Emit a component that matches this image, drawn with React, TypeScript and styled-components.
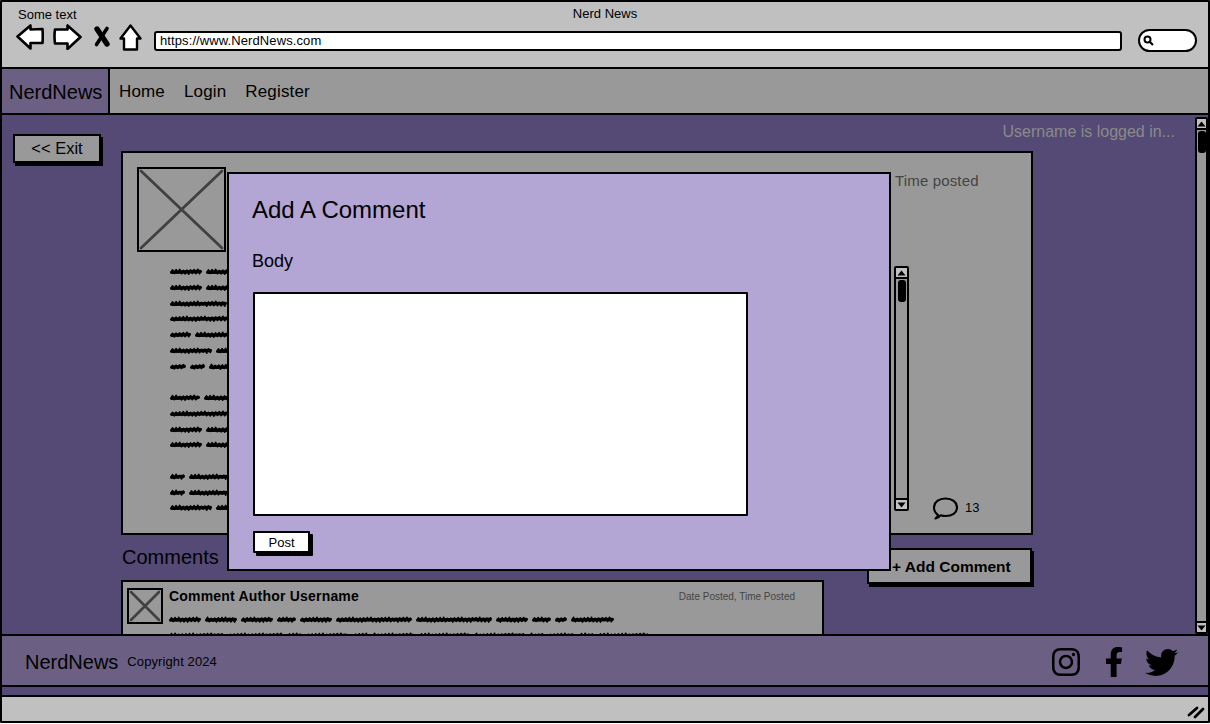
import React from "react";
import styled, { createGlobalStyle } from "styled-components";
import { FaInstagram, FaFacebookF, FaTwitter } from "react-icons/fa";

const Global = createGlobalStyle`
  html, body { margin: 0; padding: 0; background: #fff; }
  body { font-family: "Liberation Sans", Arial, sans-serif; color: #000; }
  * { box-sizing: border-box; }
`;

const Frame = styled.div`
  width: 1210px;
  height: 723px;
  border: 2px solid #000;
  border-radius: 1px;
  display: flex;
  flex-direction: column;
  overflow: hidden;
  background: #544a75;
`;

/* ---------- browser chrome ---------- */
const TitleBar = styled.header`
  height: 67px;
  flex: none;
  background: #c0c0c0;
  border-bottom: 2px solid #000;
  padding-top: 4px;
`;
const CaptionRow = styled.div`
  display: grid;
  grid-template-columns: 1fr auto 1fr;
  height: 16px;
  font-size: 13px;
  line-height: 16px;
`;
const SomeText = styled.span`
  margin: 1px 0 0 16px;
`;
const ToolRow = styled.div`
  display: flex;
  align-items: flex-start;
  margin-top: 2px;
  padding-left: 14px;
`;
const ToolIcon = styled.svg<{ $gap?: number }>`
  display: block;
  flex: none;
  margin-left: ${(p) => p.$gap ?? 0}px;
`;
const UrlBar = styled.div`
  width: 968px;
  height: 20px;
  margin: 7px 0 0 12px;
  background: #fff;
  border: 2px solid #000;
  border-radius: 3px;
  padding-left: 4px;
  font-size: 13px;
  line-height: 15px;
  letter-spacing: 0.1px;
`;
const SearchBox = styled.div`
  width: 59px;
  height: 23px;
  margin: 5px 0 0 16px;
  background: #fff;
  border: 2px solid #000;
  border-radius: 12px;
  display: flex;
  align-items: center;
  padding-left: 3px;
`;

/* ---------- site nav ---------- */
const NavBar = styled.nav`
  height: 46px;
  flex: none;
  background: #999;
  border-bottom: 2px solid #000;
  display: flex;
  align-items: stretch;
`;
const Brand = styled.div`
  width: 108px;
  background: #6b6083;
  border-right: 2px solid #000;
  padding-left: 7px;
  font-size: 20px;
  line-height: 47px;
`;
const NavLinks = styled.div`
  display: flex;
  gap: 19px;
  padding-left: 9px;
  font-size: 17px;
  line-height: 46px;
  letter-spacing: 0.15px;
`;

/* ---------- page content ---------- */
const Content = styled.main`
  position: relative;
  height: 519px;
  flex: none;
  overflow: hidden;
  background: #544a75;
  display: grid;
  grid-template-columns: 119px 912px 1fr 13px;
  grid-template-rows: 36px 1fr;
`;
const SideColumn = styled.div`
  grid-column: 1;
  grid-row: 1 / 3;
  padding: 19px 0 0 11px;
`;
const ExitButton = styled.button`
  display: block;
  width: 88px;
  height: 29px;
  padding: 0;
  background: #999;
  border: 2px solid #000;
  box-shadow: 2px 3px 0 #000;
  font: 400 16.5px/25px "Liberation Sans", Arial, sans-serif;
  color: #000;
`;
const LoggedIn = styled.div`
  grid-column: 2 / 4;
  grid-row: 1;
  padding-right: 20px;
  text-align: right;
  font-size: 16px;
  line-height: 33px;
  color: #8a8a8a;
`;
const MainColumn = styled.div`
  grid-column: 2;
  grid-row: 2;
  min-height: 0;
`;
const PostCard = styled.article`
  height: 384px;
  background: #999;
  border: 2px solid #000;
  padding: 14px 0 0 14px;
  display: flex;
`;
const PostLeft = styled.div`
  width: 757px;
  flex: none;
`;
const Thumb = styled.svg`
  display: block;
  flex: none;
`;
const PostBody = styled.div`
  margin: 12px 0 0 33px;
`;
const PostRight = styled.div`
  flex: 1;
`;
const TimePosted = styled.div`
  padding-left: 1px;
  font-size: 15px;
  line-height: 28px;
  letter-spacing: 0.15px;
  color: #444;
`;
const ScrollRow = styled.div`
  display: flex;
  align-items: flex-end;
  margin-top: 71px;
`;
const ScrollTrack = styled.div<{ $w: number; $h: number; $top?: number }>`
  position: relative;
  width: ${(p) => p.$w}px;
  height: ${(p) => p.$h}px;
  margin-top: ${(p) => p.$top ?? 0}px;
  flex: none;
  grid-column: 4;
  grid-row: 1 / 3;
  background: #999;
  border: 2px solid #000;
  border-radius: 2px;
  display: flex;
  flex-direction: column;
  justify-content: space-between;
`;
const ScrollCap = styled.div`
  height: 11px;
  background: #c0c0c0;
  display: flex;
  align-items: center;
  justify-content: center;
  border-bottom: 2px solid #000;
  &:last-child { border-bottom: 0; border-top: 2px solid #000; }
`;
const ScrollThumb = styled.div`
  position: absolute;
  top: 12px;
  left: 50%;
  margin-left: -4px;
  width: 8px;
  height: 22px;
  background: #000;
  border-radius: 3px;
`;
const CountGroup = styled.div`
  display: flex;
  align-items: center;
  gap: 7px;
  margin: 0 0 -9px 24px;
  font-size: 13px;
`;
const CountValue = styled.span`
  margin-top: -2px;
`;
const CommentsHead = styled.div`
  height: 45px;
  display: flex;
  justify-content: space-between;
  align-items: flex-start;
`;
const CommentsTitle = styled.h2`
  margin: 10px 0 0 1px;
  font-size: 20px;
  font-weight: 400;
  line-height: 24px;
`;
const AddButton = styled.button`
  width: 165px;
  height: 36px;
  margin: 13px 1px 0 0;
  padding: 0 0 0 23px;
  background: #999;
  border: 2px solid #000;
  box-shadow: 2px 3px 0 #000;
  font: 700 15.5px/34px "Liberation Sans", Arial, sans-serif;
  color: #000;
  text-align: left;
`;
const CommentCard = styled.article`
  width: 703px;
  height: 90px;
  background: #999;
  border: 2px solid #000;
  padding: 6px 27px 0 4px;
  display: flex;
  gap: 6px;
`;
const CommentMain = styled.div`
  flex: 1;
`;
const CommentHead = styled.div`
  display: flex;
  justify-content: space-between;
  align-items: center;
  height: 16px;
`;
const Author = styled.strong`
  font-size: 14px;
  letter-spacing: 0.2px;
`;
const CommentDate = styled.span`
  font-size: 10px;
  color: #444;
`;
const CommentBody = styled.div`
  margin-top: 8px;
`;
const SquiggleSvg = styled.svg`
  display: block;
`;

/* ---------- modal ---------- */
const Modal = styled.section`
  position: absolute;
  left: 225px;
  top: 57px;
  width: 664px;
  height: 399px;
  background: #b3a5d4;
  border: 2px solid #000;
  padding: 18px 0 0 23px;
`;
const ModalTitle = styled.h1`
  margin: 0;
  font-size: 24px;
  font-weight: 400;
  line-height: 36px;
`;
const FieldLabel = styled.label`
  display: block;
  margin-top: 21px;
  font-size: 18px;
  line-height: 24px;
`;
const TextBox = styled.div`
  width: 495px;
  height: 224px;
  margin: 19px 0 0 1px;
  background: #fff;
  border: 2px solid #000;
  border-radius: 1px;
`;
const PostButton = styled.button`
  display: block;
  width: 57px;
  height: 22px;
  margin: 15px 0 0 1px;
  padding: 0;
  background: #fff;
  border: 2px solid #000;
  border-radius: 1px;
  box-shadow: 3px 3px 0 #000;
  font: 400 13px/20px "Liberation Sans", Arial, sans-serif;
  color: #000;
`;

/* ---------- footer ---------- */
const Footer = styled.footer`
  height: 53px;
  flex: none;
  background: #6b6083;
  border-top: 2px solid #000;
  border-bottom: 2px solid #000;
  display: flex;
  align-items: center;
  padding: 3px 30px 0 23px;
`;
const FooterBrand = styled.span`
  font-size: 20px;
`;
const Copyright = styled.span`
  margin: -1px 0 0 9px;
  font-size: 13px;
  letter-spacing: 0.1px;
`;
const Socials = styled.div`
  margin-left: auto;
  display: flex;
  align-items: center;
  gap: 16.5px;
  line-height: 0;
`;
const Strip = styled.div`
  height: 8px;
  flex: none;
  background: #544a75;
`;
const StatusBar = styled.div`
  height: 26px;
  flex: none;
  background: #c0c0c0;
  border-top: 2px solid #000;
  display: flex;
  justify-content: flex-end;
  align-items: center;
  padding: 4px 2px 0 0;
`;

/* ---------- drawings ---------- */
function wordPath(x0: number, x1: number, seed: number, mid: number) {
  let d = `M${x0} ${mid + 0.8}`;
  let i = 0;
  for (let x = x0 + 1.5; x < x1; x += 1.8) {
    const up = i % 2 === 0;
    const j = ((seed * 7 + i * 13) % 5) / 5;
    const lift = i % 7 === 3 ? 0.8 : 0;
    d += ` L${x.toFixed(1)} ${(mid + (up ? -1.4 - j * 1.3 : 1.5 + j * 0.9 - lift)).toFixed(1)}`;
    i += 1;
  }
  d += ` L${x1} ${mid - 0.8}`;
  return d;
}

const Squiggle = ({ words, width, height = 16 }: { words: number[]; width: number; height?: number }) => {
  let x = 1;
  const mid = height / 2;
  return (
    <SquiggleSvg width={width} height={height} viewBox={`0 0 ${width} ${height}`} aria-hidden="true">
      {words.map((w, i) => {
        const d = wordPath(x, x + w - 1, i + w, mid);
        const base = `M${x + 1} ${mid + 0.3} L${x + w - 2} ${mid - 0.3}`;
        x += w + 5;
        return (
          <g key={i} fill="none" stroke="#000" strokeLinecap="round" strokeLinejoin="round">
            <path d={base} strokeWidth={3.6} />
            <path d={d} strokeWidth={1.7} />
          </g>
        );
      })}
    </SquiggleSvg>
  );
};

const ImagePlaceholder = ({ w, h, inset, stroke }: { w: number; h: number; inset: number; stroke: number }) => (
  <Thumb width={w} height={h} viewBox={`0 0 ${w} ${h}`} aria-hidden="true">
    <rect x={1} y={1} width={w - 2} height={h - 2} fill="#999" stroke="#000" strokeWidth={2} />
    <path
      d={`M${inset} ${inset} L${w - inset} ${h - inset} M${w - inset} ${inset} L${inset} ${h - inset}`}
      stroke="#404040"
      strokeWidth={stroke}
      strokeLinecap="round"
    />
  </Thumb>
);

const Triangle = ({ down }: { down?: boolean }) => (
  <svg width="9" height="6" viewBox="0 0 9 6" aria-hidden="true">
    <path d={down ? "M0.5 0.5 H8.5 L4.5 5.5 Z" : "M0.5 5.5 H8.5 L4.5 0.5 Z"} fill="#000" />
  </svg>
);

const Scrollbar = ({ w, h, top }: { w: number; h: number; top?: number }) => (
  <ScrollTrack $w={w} $h={h} $top={top}>
    <ScrollCap>
      <Triangle />
    </ScrollCap>
    <ScrollThumb />
    <ScrollCap>
      <Triangle down />
    </ScrollCap>
  </ScrollTrack>
);

const POST_LINES: (number[] | null)[] = [
  [31, 60],
  [31, 60],
  [56, 40],
  [60, 40],
  [20, 60],
  [41, 60],
  [15, 14, 60],
  null,
  [29, 60],
  [60, 40],
  [31, 60],
  [31, 60],
  null,
  [14, 60],
  [14, 60],
  [41, 60],
];

const COMMENT_WORDS = [31, 31, 31, 18, 31, 75, 75, 31, 18, 11, 42];
const COMMENT_WORDS_2 = [54, 54, 14, 42, 14, 42, 50, 50, 14, 26, 14, 50, 54];

export default function App() {
  return (
    <>
      <Global />
      <Frame>
        <TitleBar>
          <CaptionRow>
            <SomeText>Some text</SomeText>
            <span>Nerd News</span>
            <span />
          </CaptionRow>
          <ToolRow>
            <ToolIcon width="28" height="26" viewBox="0 0 28 26" aria-hidden="true">
              <path d="M1.5 12.5 L14.5 1.5 V5.5 L26.5 5 Q27 12 26.5 19 L14.5 19 V24.5 Z" fill="#fff" stroke="#000" strokeWidth="2.6" strokeLinejoin="round" />
            </ToolIcon>
            <ToolIcon $gap={9} width="29" height="26" viewBox="0 0 29 26" aria-hidden="true">
              <path d="M27.5 13 L14.5 1.5 V5.5 L2 5.5 Q1 12 2 19.5 L14.5 19.5 V25 Z" fill="#fff" stroke="#000" strokeWidth="2.6" strokeLinejoin="round" />
            </ToolIcon>
            <ToolIcon $gap={12} width="16" height="26" viewBox="0 0 16 26" aria-hidden="true">
              <path d="M3 5 L13 20" stroke="#000" strokeWidth="5.4" strokeLinecap="round" />
              <path d="M13 4.5 L2.5 20.5" stroke="#000" strokeWidth="3.6" strokeLinecap="round" />
            </ToolIcon>
            <ToolIcon $gap={9} width="23" height="27" viewBox="0 0 23 27" aria-hidden="true">
              <path d="M11.5 1.5 L21.5 14.5 H18 V25.5 H5 V14.5 H1.5 Z" fill="#fff" stroke="#000" strokeWidth="2.4" strokeLinejoin="round" />
            </ToolIcon>
            <UrlBar>https://www.NerdNews.com</UrlBar>
            <SearchBox>
              <svg width="11" height="11" viewBox="0 0 11 11" aria-hidden="true">
                <circle cx="4.5" cy="4.5" r="3" fill="none" stroke="#000" strokeWidth="2" />
                <path d="M7 7 L10 10" stroke="#000" strokeWidth="2.2" />
              </svg>
            </SearchBox>
          </ToolRow>
        </TitleBar>

        <NavBar>
          <Brand>NerdNews</Brand>
          <NavLinks>
            <span>Home</span>
            <span>Login</span>
            <span>Register</span>
          </NavLinks>
        </NavBar>

        <Content>
          <SideColumn>
            <ExitButton>&lt;&lt; Exit</ExitButton>
          </SideColumn>
          <LoggedIn>Username is logged in...</LoggedIn>
          <MainColumn>
            <PostCard>
              <PostLeft>
                <ImagePlaceholder w={89} h={85} inset={4} stroke={2.8} />
                <PostBody>
                  {POST_LINES.map((words, i) => (
                    <Squiggle key={i} words={words ?? []} width={100} height={15.75} />
                  ))}
                </PostBody>
              </PostLeft>
              <PostRight>
                <TimePosted>Time posted</TimePosted>
                <ScrollRow>
                  <Scrollbar w={15} h={245} />
                  <CountGroup>
                    <svg width="25" height="23" viewBox="0 0 25 23" aria-hidden="true">
                      <path
                        d="M5 18 C1.5 15.5 1 12 1 10.5 C1 5 6 1.5 12.5 1.5 C19 1.5 24 5 24 10.5 C24 16 19 19 12.5 19 C10.5 19 9 18.6 7.5 18.2 C6.5 19.8 4.8 21 2.5 21.5 C3.8 20.5 4.8 19.3 5 18 Z"
                        fill="none"
                        stroke="#000"
                        strokeWidth="2.1"
                        strokeLinejoin="round"
                      />
                    </svg>
                    <CountValue>13</CountValue>
                  </CountGroup>
                </ScrollRow>
              </PostRight>
            </PostCard>
            <CommentsHead>
              <CommentsTitle>Comments</CommentsTitle>
              <AddButton>+ Add Comment</AddButton>
            </CommentsHead>
            <CommentCard>
              <ImagePlaceholder w={36} h={36} inset={4} stroke={2.6} />
              <CommentMain>
                <CommentHead>
                  <Author>Comment Author Username</Author>
                  <CommentDate>Date Posted, Time Posted</CommentDate>
                </CommentHead>
                <CommentBody>
                  <Squiggle words={COMMENT_WORDS} width={480} height={15.5} />
                  <Squiggle words={COMMENT_WORDS_2} width={480} height={15.5} />
                </CommentBody>
              </CommentMain>
            </CommentCard>
          </MainColumn>
          <Scrollbar w={13} h={517} top={2} />
          <Modal>
            <ModalTitle>Add A Comment</ModalTitle>
            <FieldLabel>Body</FieldLabel>
            <TextBox />
            <PostButton>Post</PostButton>
          </Modal>
        </Content>

        <Footer>
          <FooterBrand>NerdNews</FooterBrand>
          <Copyright>Copyright 2024</Copyright>
          <Socials>
            <FaInstagram size={32} />
            <FaFacebookF size={30} />
            <FaTwitter size={33} />
          </Socials>
        </Footer>
        <Strip />
        <StatusBar>
          <svg width="20" height="18" viewBox="0 0 20 18" aria-hidden="true">
            <path d="M3 13 L11 6 M9 15 L17 7" stroke="#000" strokeWidth="2.8" strokeLinecap="round" />
          </svg>
        </StatusBar>
      </Frame>
    </>
  );
}
